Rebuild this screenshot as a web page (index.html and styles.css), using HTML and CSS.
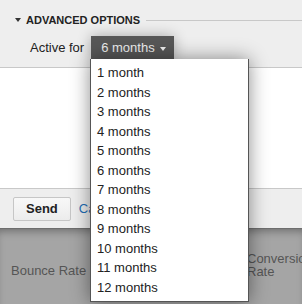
FILE: index.html
```html
<!DOCTYPE html>
<html lang="en">
<head>
  <meta charset="UTF-8">
  <title>Advanced options</title>
  <link rel="stylesheet" href="styles.css">
</head>
<body>

  <section id="options">
    <div class="section-title">
      <span class="caret"></span>
      <span class="title-text">ADVANCED OPTIONS</span>
      <span class="rule"></span>
    </div>
    <div class="active-row">
      <span class="label">Active for</span>
      <button class="picker">6 months <span class="picker-arrow"></span></button>
    </div>
  </section>

  <section id="body"></section>

  <div id="footer">
    <button class="send-button">Send</button>
    <a class="cancel-link" href="#">Cancel</a>
  </div>

  <div id="report">
    <div class="metric">Bounce Rate</div>
    <div class="metric metric-right">Conversion<br>Rate</div>
  </div>

  <ul id="menu">
    <li>1 month</li>
    <li>2 months</li>
    <li>3 months</li>
    <li>4 months</li>
    <li>5 months</li>
    <li>6 months</li>
    <li>7 months</li>
    <li>8 months</li>
    <li>9 months</li>
    <li>10 months</li>
    <li>11 months</li>
    <li>12 months</li>
  </ul>

</body>
</html>
```

FILE: styles.css
```css
body {
  margin: 0;
  background-color: #eeeeee;
  font-family: "Liberation Sans", Arial, sans-serif;
  font-size: 13px;
  color: #222;
  overflow: hidden;
}

#options {
  height: 67px;
  box-sizing: border-box;
  padding-top: 14px;
}

.section-title {
  display: flex;
  align-items: center;
  height: 12px;
  padding-left: 15px;
}

.caret {
  width: 0;
  height: 0;
  border-left: 3.5px solid transparent;
  border-right: 3.5px solid transparent;
  border-top: 4px solid #333;
  margin-right: 5px;
}

.title-text {
  font-size: 11px;
  font-weight: bold;
  color: #222;
}

.rule {
  flex: 1;
  border-top: 1px solid #c8c8c8;
  margin-left: 6px;
}

.active-row {
  display: flex;
  align-items: center;
  margin-top: 10px;
  padding-left: 30px;
}

.label {
  margin-right: 7px;
}

.picker {
  display: flex;
  align-items: center;
  height: 23px;
  padding: 0 8px 0 10px;
  border: none;
  background-color: #575757;
  color: #eeeeee;
  font-family: inherit;
  font-size: 13px;
  box-shadow: 0 0 14px rgba(0, 0, 0, 0.3);
}

.picker-arrow {
  width: 0;
  height: 0;
  border-left: 3.5px solid transparent;
  border-right: 3.5px solid transparent;
  border-top: 4px solid #eeeeee;
  margin-left: 5px;
  margin-top: 2px;
}

#body {
  height: 120px;
  background-color: white;
  border-top: 1px solid #c8c8c8;
  border-bottom: 1px solid #c8c8c8;
}

#footer {
  display: flex;
  align-items: center;
  height: 39px;
  padding-left: 13px;
  box-sizing: border-box;
}

.send-button {
  height: 24px;
  padding: 0 12px;
  border: 1px solid #c6c6c6;
  border-radius: 2px;
  background: linear-gradient(#f8f8f8, #ececec);
  font-family: inherit;
  font-size: 13px;
  font-weight: bold;
  color: #222;
}

.cancel-link {
  margin-left: 8px;
  color: #1e6fb6;
  text-decoration: none;
}

#report {
  display: flex;
  height: 80px;
  background-color: #a5a5a5;
  border-top: 1px solid #6e6e6e;
  box-shadow: inset 0 6px 8px -4px rgba(0, 0, 0, 0.35);
  color: #555;
}

.metric {
  padding: 35px 0 0 11px;
  line-height: 13px;
}

.metric-right {
  margin-left: auto;
  width: 55px;
  padding: 23px 0 0 0;
  white-space: nowrap;
}

#menu {
  position: absolute;
  left: 90px;
  top: 59px;
  width: 159px;
  margin: 0;
  padding: 4px 0;
  box-sizing: border-box;
  list-style: none;
  background-color: white;
  border: 1px solid #555;
  border-top: none;
  box-shadow: 0 0 18px rgba(0, 0, 0, 0.45);
}

#menu li {
  height: 19.5px;
  line-height: 19.5px;
  padding-left: 6px;
  color: #222;
}
```
